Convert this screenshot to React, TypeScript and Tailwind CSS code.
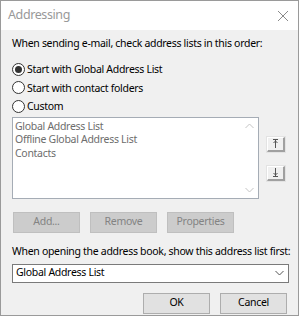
import React from "react";

const font = { fontFamily: '"Noto Sans", "Open Sans", sans-serif' };

function Radio({ checked, label }: { checked?: boolean; label: string }) {
  return (
    <div className="flex items-center h-[18.5px]">
      <div className="w-[13px] h-[13px] rounded-full border border-[#333333] bg-white flex items-center justify-center">
        {checked && <div className="w-[7px] h-[7px] rounded-full bg-[#333333]" />}
      </div>
      <span className="ml-[2px] text-[10.5px] tracking-[-0.3px] text-black leading-none whitespace-nowrap">{label}</span>
    </div>
  );
}

function DisabledBtn({ label }: { label: string }) {
  return (
    <div className="w-[67px] h-[21px] bg-[#cccccc] border border-[#bfbfbf] flex items-center justify-center text-[10.5px] tracking-[-0.3px] text-[#838383] whitespace-nowrap">
      {label}
    </div>
  );
}

function Btn({ label }: { label: string }) {
  return (
    <div className="w-[67px] h-[21px] bg-[#e1e1e1] border border-[#adadad] flex items-center justify-center text-[10.5px] tracking-[-0.3px] text-black whitespace-nowrap">
      {label}
    </div>
  );
}

function ArrowBtn({ up }: { up?: boolean }) {
  return (
    <div className="w-[18px] h-[15px] bg-[#f0f0f0] border-t border-l border-[#ffffff] border-r-2 border-b-2 border-r-[#a0a0a0] border-b-[#a0a0a0] flex items-center justify-center shadow-[0_0_0_1px_#e3e3e3]">
      <svg width="7" height="9" viewBox="0 0 7 9">
        {up ? (
          <g stroke="#555" strokeWidth="1" fill="none">
            <line x1="1" y1="0.5" x2="6" y2="0.5" />
            <line x1="3.5" y1="1" x2="3.5" y2="9" />
            <polyline points="1.5,4 3.5,2 5.5,4" />
          </g>
        ) : (
          <g stroke="#555" strokeWidth="1" fill="none">
            <line x1="1" y1="8.5" x2="6" y2="8.5" />
            <line x1="3.5" y1="0" x2="3.5" y2="8" />
            <polyline points="1.5,5 3.5,7 5.5,5" />
          </g>
        )}
      </svg>
    </div>
  );
}

export default function App() {
  return (
    <div className="w-[300px] h-[317px] bg-white" style={font}>
      <div className="w-[299px] h-[316px] border border-[#9a9a9a] bg-[#f0f0f0] flex flex-col">
        <div className="h-[29px] bg-white flex items-center justify-between pl-[7px] pr-[8px] shrink-0">
          <span className="text-[12.5px] tracking-[-0.4px] text-[#999999] leading-none">Addressing</span>
          <svg width="12" height="12" viewBox="0 0 12 12" className="mr-[1px]">
            <path d="M1 1L11 11M11 1L1 11" stroke="#8a8a8a" strokeWidth="1" />
          </svg>
        </div>
        <div className="px-[11px] flex flex-col">
          <div className="mt-[6px] h-[14px] flex items-center text-[10.5px] tracking-[-0.3px] text-black leading-none whitespace-nowrap">
            When sending e-mail, check address lists in this order:
          </div>
          <div className="mt-[10px] flex flex-col">
            <Radio checked label="Start with Global Address List" />
            <Radio label="Start with contact folders" />
            <Radio label="Custom" />
          </div>
          <div className="mt-[1px] flex">
            <div className="w-[247px] h-[82px] bg-white border border-[#a5acb5] flex">
              <div className="flex-1 pl-[2px] pt-[2px] text-[10.5px] tracking-[-0.3px] text-[#6d6d6d] leading-[13.5px] whitespace-nowrap">
                <div>Global Address List</div>
                <div>Offline Global Address List</div>
                <div>Contacts</div>
              </div>
              <div className="w-[17px] flex flex-col justify-between items-center py-[5px]">
                <svg width="9" height="6" viewBox="0 0 9 6">
                  <polyline points="0.5,5 4.5,1 8.5,5" stroke="#c4c4c4" fill="none" />
                </svg>
                <svg width="9" height="6" viewBox="0 0 9 6">
                  <polyline points="0.5,1 4.5,5 8.5,1" stroke="#c4c4c4" fill="none" />
                </svg>
              </div>
            </div>
            <div className="ml-[8px] flex flex-col pt-[20px] gap-[14px]">
              <ArrowBtn up />
              <ArrowBtn />
            </div>
          </div>
          <div className="mt-[13px] flex gap-[10px] pl-[1px]">
            <DisabledBtn label="Add..." />
            <DisabledBtn label="Remove" />
            <DisabledBtn label="Properties" />
          </div>
          <div className="mt-[12px] h-[14px] flex items-center text-[10.5px] tracking-[-0.3px] text-black leading-none whitespace-nowrap">
            When opening the address book, show this address list first:
          </div>
          <div className="mt-[5px] w-[277px] h-[19px] bg-white border border-[#7a7a7a] flex items-center justify-between pl-[3px] pr-[4px] text-[10.5px] tracking-[-0.3px] text-black">
            <span>Global Address List</span>
            <svg width="9" height="6" viewBox="0 0 9 6">
              <polyline points="0.5,1 4.5,5 8.5,1" stroke="#555" fill="none" />
            </svg>
          </div>
          <div className="mt-[10px] flex justify-end gap-[10px] pr-[0px]">
            <Btn label="OK" />
            <Btn label="Cancel" />
          </div>
        </div>
      </div>
    </div>
  );
}
